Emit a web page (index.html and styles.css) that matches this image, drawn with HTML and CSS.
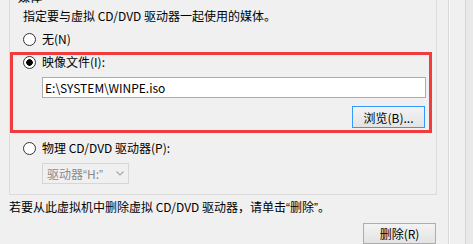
FILE: index.html
```html
<!DOCTYPE html>
<html lang="zh-CN">
<head>
  <meta charset="UTF-8">
  <title>CD/DVD 驱动器</title>
  <link rel="stylesheet" href="styles.css">
</head>
<body>
  <div class="window">
    <div class="pane">
      <fieldset class="group">
        <legend>媒体</legend>
        <div class="desc">指定要与虚拟 CD/DVD 驱动器一起使用的媒体。</div>
        <label class="opt"><input type="radio" name="media"> 无(N)</label>
        <div class="highlight">
          <label class="opt"><input type="radio" name="media" checked> 映像文件(I):</label>
          <input type="text" class="path" value="E:\SYSTEM\WINPE.iso">
          <div class="actions">
            <button class="btn default">浏览(B)...</button>
          </div>
        </div>
        <label class="opt"><input type="radio" name="media"> 物理 CD/DVD 驱动器(P):</label>
        <div class="drive">
          <span>驱动器<span class="q">“</span>H:<span class="q">”</span></span>
          <svg width="8" height="5" viewBox="0 0 8 5"><path d="M0.5 0.5 L4 4 L7.5 0.5" fill="none" stroke="#a8a8a8" stroke-width="1.2"/></svg>
        </div>
      </fieldset>
      <div class="note">若要从此虚拟机中删除虚拟 CD/DVD 驱动器，请单击<span class="q">“</span>删除<span class="q">”</span>。</div>
      <div class="actions bottom">
        <button class="btn">删除(R)</button>
      </div>
    </div>
    <div class="side">
      <div class="rail"></div>
      <div class="edge"></div>
    </div>
  </div>
</body>
</html>
```

FILE: styles.css
```css
* {
  margin: 0;
  padding: 0;
  box-sizing: border-box;
}

body {
  background-color: #f0f0f0;
  font-family: "Noto Sans CJK SC", sans-serif;
  font-size: 12px;
  color: #000;
  overflow: hidden;
}

.q {
  font-family: "Liberation Sans", sans-serif;
}

.window {
  display: flex;
  height: 244px;
}

.pane {
  width: 437px;
  flex: none;
  padding-left: 9px;
}

.group {
  margin-top: -11px;
  border: 1px solid #dcdcdc;
  min-inline-size: 0;
  padding: 0 0 10px 0;
}

.group legend {
  margin-left: 6px;
  padding: 0 2px;
  line-height: 16px;
}

.desc {
  margin: 3px 0 0 13px;
  height: 16px;
  line-height: 16px;
}

.opt {
  display: flex;
  align-items: center;
  height: 14px;
  line-height: 14px;
  margin-top: 8px;
  padding-left: 13px;
}

.opt input {
  appearance: none;
  width: 13px;
  height: 13px;
  margin-right: 6px;
  border: 1px solid #333;
  border-radius: 50%;
  background: #fff;
}

.opt input:checked {
  background: radial-gradient(circle, #000 0 3px, #fff 3.5px);
}

.highlight {
  margin-top: 6px;
  width: 422px;
  border: 3px solid #f03c3c;
  padding-bottom: 2px;
}

.highlight .opt {
  margin-top: 0;
  padding-left: 10px;
}

.path {
  display: block;
  margin: 8px 3px 0 29px;
  width: 384px;
  height: 21px;
  border: 1px solid #acacac;
  background: #fff;
  padding: 0 2px;
  font: inherit;
  color: #000;
}

.actions {
  display: flex;
  justify-content: flex-end;
  margin-top: 8px;
  padding-right: 4px;
}

.btn {
  width: 73px;
  height: 22px;
  border: 1px solid #adadad;
  background: linear-gradient(#f3f3f3, #e3e3e3);
  font: inherit;
  color: #000;
}

.btn.default {
  border-color: #3399ff;
}

.drive {
  display: flex;
  align-items: center;
  justify-content: space-between;
  margin: 8px 0 0 32px;
  width: 87px;
  height: 21px;
  border: 1px solid #d6d6d6;
  padding: 0 4px 0 4px;
  color: #8a8a8a;
}

.note {
  margin-top: 4px;
  height: 16px;
  line-height: 16px;
}

.actions.bottom {
  padding-right: 1px;
}

.actions.bottom .btn {
  height: 21px;
}

.side {
  flex: 1;
  display: flex;
}

.rail {
  margin-left: 11px;
  width: 18px;
  border-left: 1px solid #d9d9d9;
  border-right: 1px solid #d6d6d6;
  box-shadow: inset 1px 0 #fcfcfc;
}

.edge {
  flex: 1;
  background: #e9e9e9;
}
```
